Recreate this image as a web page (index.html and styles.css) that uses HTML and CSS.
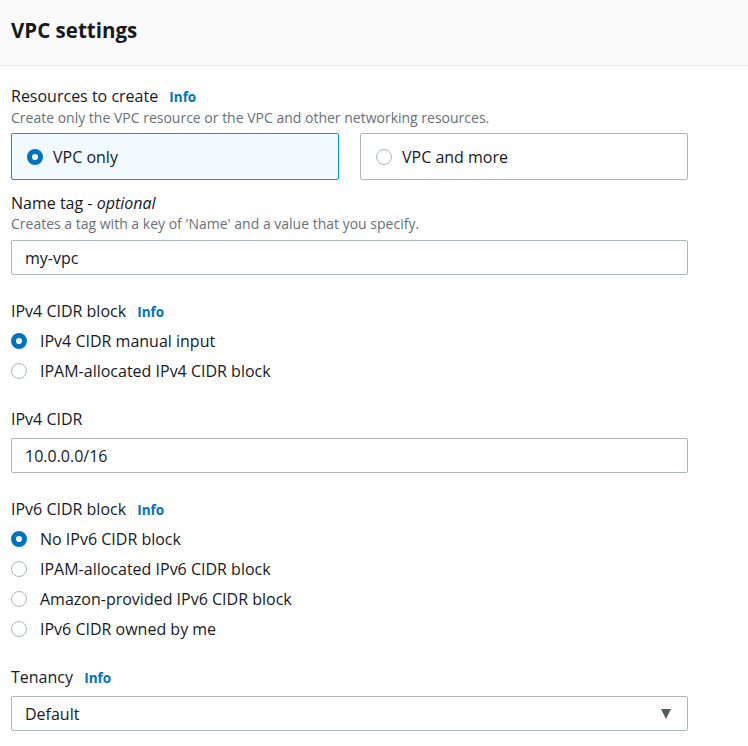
FILE: index.html
```html
<!DOCTYPE html>
<html>
<head>
<meta charset="utf-8">
<link rel="stylesheet" href="styles.css">
</head>
<body>
<div class="card">
  <div class="header"><h2 class="title">VPC settings</h2></div>
  <div class="content">
    <div class="field">
      <div class="label">Resources to create <span class="info">Info</span></div>
      <div class="desc">Create only the VPC resource or the VPC and other networking resources.</div>
      <div class="tiles">
        <div class="tile selected"><span class="radio checked"></span><span>VPC only</span></div>
        <div class="tile"><span class="radio"></span><span>VPC and more</span></div>
      </div>
    </div>
    <div class="field f-name">
      <div class="label">Name tag - <i>optional</i></div>
      <div class="desc">Creates a tag with a key of 'Name' and a value that you specify.</div>
      <div class="input">my-vpc</div>
    </div>
    <div class="field f-ipv4">
      <div class="label">IPv4 CIDR block <span class="info">Info</span></div>
      <div class="radios">
        <div class="opt"><span class="radio checked"></span>IPv4 CIDR manual input</div>
        <div class="opt"><span class="radio"></span>IPAM-allocated IPv4 CIDR block</div>
      </div>
    </div>
    <div class="field f-cidr">
      <div class="label">IPv4 CIDR</div>
      <div class="input">10.0.0.0/16</div>
    </div>
    <div class="field f-ipv6">
      <div class="label">IPv6 CIDR block <span class="info">Info</span></div>
      <div class="radios">
        <div class="opt"><span class="radio checked"></span>No IPv6 CIDR block</div>
        <div class="opt"><span class="radio"></span>IPAM-allocated IPv6 CIDR block</div>
        <div class="opt"><span class="radio"></span>Amazon-provided IPv6 CIDR block</div>
        <div class="opt"><span class="radio"></span>IPv6 CIDR owned by me</div>
      </div>
    </div>
    <div class="field f-ten">
      <div class="label">Tenancy <span class="info">Info</span></div>
      <div class="input select"><span>Default</span><span class="caret"></span></div>
    </div>
  </div>
</div>
</body>
</html>
```
FILE: styles.css
```css
* { box-sizing: border-box; }
html, body { margin: 0; padding: 0; background: #fff; }
body {
  font-family: "Open Sans", "Noto Sans", sans-serif;
  font-size: 16px;
  color: #16191f;
}
.header {
  background: #fafafa;
  border-bottom: 1px solid #eaeded;
  height: 66px;
  padding: 15px 11px 0;
}
.title {
  margin: 0;
  font-size: 20.5px;
  font-weight: 700;
  line-height: 30px;
}
.content {
  padding: 19px 60px 0 11px;
}
.label {
  line-height: 22px;
  font-size: 16px;
}
.info {
  color: #0073bb;
  font-weight: 700;
  font-size: 13.5px;
  margin-left: 7px;
}
.desc {
  font-size: 14px;
  color: #687078;
  line-height: 19px;
}
.tiles {
  display: grid;
  grid-template-columns: 1fr 1fr;
  gap: 21px;
  margin-top: 6px;
}
.tile {
  height: 47px;
  border: 1px solid #aab7b8;
  border-radius: 2px;
  display: flex;
  align-items: center;
  padding-left: 15px;
  gap: 10px;
}
.tile.selected {
  background: #f1faff;
  border-color: #00a1c9;
}
.radio {
  width: 16px;
  height: 16px;
  border-radius: 50%;
  border: 1.5px solid #aab7b8;
  display: inline-block;
  flex: none;
  background: #fff;
}
.radio.checked {
  border: 5px solid #0073bb;
}
.f-name { margin-top: 12px; }
.input {
  margin-top: 7px;
  height: 35px;
  border: 1px solid #aab7b8;
  border-radius: 2px;
  display: flex;
  align-items: center;
  padding-left: 13px;
  padding-right: 16px;
}
.f-ipv4 { margin-top: 25px; }
.radios { margin-top: 3px; }
.opt {
  height: 30px;
  display: flex;
  align-items: center;
  gap: 13px;
}
.f-cidr { margin-top: 22px; }
.f-cidr .input { margin-top: 8px; }
.f-ipv6 { margin-top: 25px; }
.f-ten { margin-top: 22px; }
.select { justify-content: space-between; }
.caret {
  width: 0; height: 0;
  border-left: 5.5px solid transparent;
  border-right: 5.5px solid transparent;
  border-top: 10px solid #545b64;
}
```
